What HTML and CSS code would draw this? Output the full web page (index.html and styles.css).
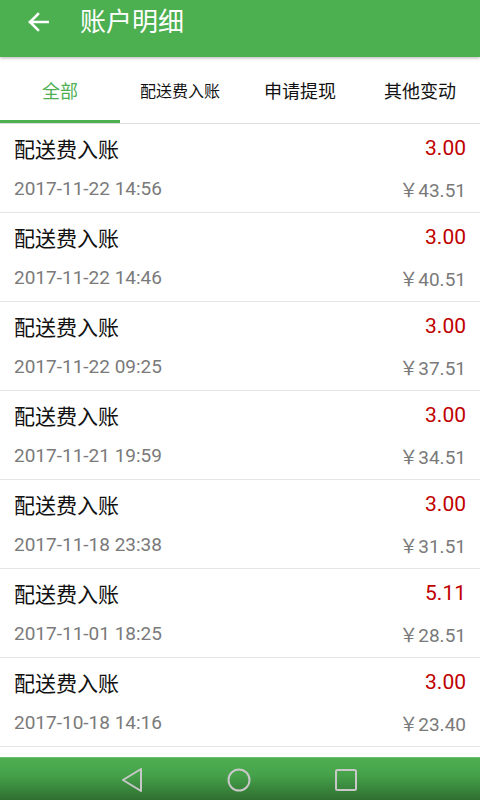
FILE: index.html
```html
<!DOCTYPE html>
<html lang="zh-CN">
  <head>
    <meta charset="UTF-8" />
    <meta name="viewport" content="width=device-width, initial-scale=1.0" />
    <title>账户明细</title>
    <link rel="stylesheet" href="styles.css">
  </head>
  <body>
    <div class="page">
      <div class="topbar">
        <svg class="back" width="22" height="20" viewBox="0 0 22 20">
          <path d="M21 10H3M11 2L3 10l8 8" fill="none" stroke="#fff" stroke-width="2.6" stroke-linecap="square" />
        </svg>
        <div class="title">账户明细</div>
      </div>
      <div class="tabs">
        <div class="tab active">全部</div>
        <div class="tab small">配送费入账</div>
        <div class="tab">申请提现</div>
        <div class="tab">其他变动</div>
      </div>
      <div class="list">
        <div class="item">
          <div class="line"><span class="name">配送费入账</span><span class="money">3.00</span></div>
          <div class="line"><span class="time">2017-11-22 14:56</span><span class="left">￥43.51</span></div>
        </div>
        <div class="item">
          <div class="line"><span class="name">配送费入账</span><span class="money">3.00</span></div>
          <div class="line"><span class="time">2017-11-22 14:46</span><span class="left">￥40.51</span></div>
        </div>
        <div class="item">
          <div class="line"><span class="name">配送费入账</span><span class="money">3.00</span></div>
          <div class="line"><span class="time">2017-11-22 09:25</span><span class="left">￥37.51</span></div>
        </div>
        <div class="item">
          <div class="line"><span class="name">配送费入账</span><span class="money">3.00</span></div>
          <div class="line"><span class="time">2017-11-21 19:59</span><span class="left">￥34.51</span></div>
        </div>
        <div class="item">
          <div class="line"><span class="name">配送费入账</span><span class="money">3.00</span></div>
          <div class="line"><span class="time">2017-11-18 23:38</span><span class="left">￥31.51</span></div>
        </div>
        <div class="item">
          <div class="line"><span class="name">配送费入账</span><span class="money">5.11</span></div>
          <div class="line"><span class="time">2017-11-01 18:25</span><span class="left">￥28.51</span></div>
        </div>
        <div class="item">
          <div class="line"><span class="name">配送费入账</span><span class="money">3.00</span></div>
          <div class="line"><span class="time">2017-10-18 14:16</span><span class="left">￥23.40</span></div>
        </div>
      </div>
      <div class="navbar">
        <svg width="22" height="26" viewBox="0 0 22 26">
          <path d="M20 2L2 13l18 11z" fill="none" stroke="#c8c8c8" stroke-width="2" stroke-linejoin="round" />
        </svg>
        <svg width="24" height="24" viewBox="0 0 24 24">
          <circle cx="12" cy="12" r="10.5" fill="none" stroke="#c8c8c8" stroke-width="2" />
        </svg>
        <svg width="22" height="22" viewBox="0 0 22 22">
          <rect x="1" y="1" width="20" height="20" rx="1.5" fill="none" stroke="#c8c8c8" stroke-width="2" />
        </svg>
      </div>
    </div>
  </body>
</html>
```
FILE: styles.css
```css
body {
  margin: 0;
  background-color: #fff;
  font-family: Roboto, "Noto Sans CJK SC", sans-serif;
}

.page {
  height: 800px;
  display: flex;
  flex-direction: column;
  overflow: hidden;
}

.topbar {
  flex-shrink: 0;
  height: 57px;
  background-color: #4caf50;
  display: flex;
  align-items: flex-start;
  padding-top: 8px;
  box-sizing: border-box;
  box-shadow: 0 1px 3px rgba(0, 0, 0, 0.3);
  position: relative;
  z-index: 1;
}

.back {
  margin-left: 27px;
  margin-top: 4px;
}

.title {
  margin-left: 31px;
  color: #fff;
  font-size: 26px;
  line-height: 28px;
}

.tabs {
  flex-shrink: 0;
  height: 67px;
  box-sizing: border-box;
  display: flex;
  border-bottom: 1px solid #ddd;
}

.tab {
  flex: 1;
  display: flex;
  justify-content: center;
  align-items: center;
  font-size: 18px;
  color: #111;
  padding-top: 2px;
  border-bottom: 3px solid transparent;
}

.tab.small {
  font-size: 16px;
}

.tab.active {
  color: #4caf50;
  border-bottom-color: #4caf50;
}

.list {
  flex: 1;
  min-height: 0;
  overflow: hidden;
}

.item {
  height: 89px;
  box-sizing: border-box;
  border-bottom: 1px solid #e6e6e6;
  padding: 10px 14px 0 14px;
}

.line {
  display: flex;
  justify-content: space-between;
  align-items: center;
  height: 28px;
}

.line + .line {
  margin-top: 12px;
}

.name {
  font-size: 21px;
  color: #111;
}

.money {
  font-size: 21px;
  color: #c00000;
}

.time {
  font-size: 19px;
  color: #7a7a7a;
}

.left {
  font-size: 19px;
  color: #7a7a7a;
}

.navbar {
  flex-shrink: 0;
  height: 43px;
  box-sizing: border-box;
  background-image: linear-gradient(to bottom, #4caf50, #46a24a 40%, #2f6f31);
  border-top: 1px solid #6cc06f;
  display: flex;
  justify-content: center;
  align-items: center;
  gap: 84px;
  padding-top: 2px;
  padding-right: 2px;
}
```
